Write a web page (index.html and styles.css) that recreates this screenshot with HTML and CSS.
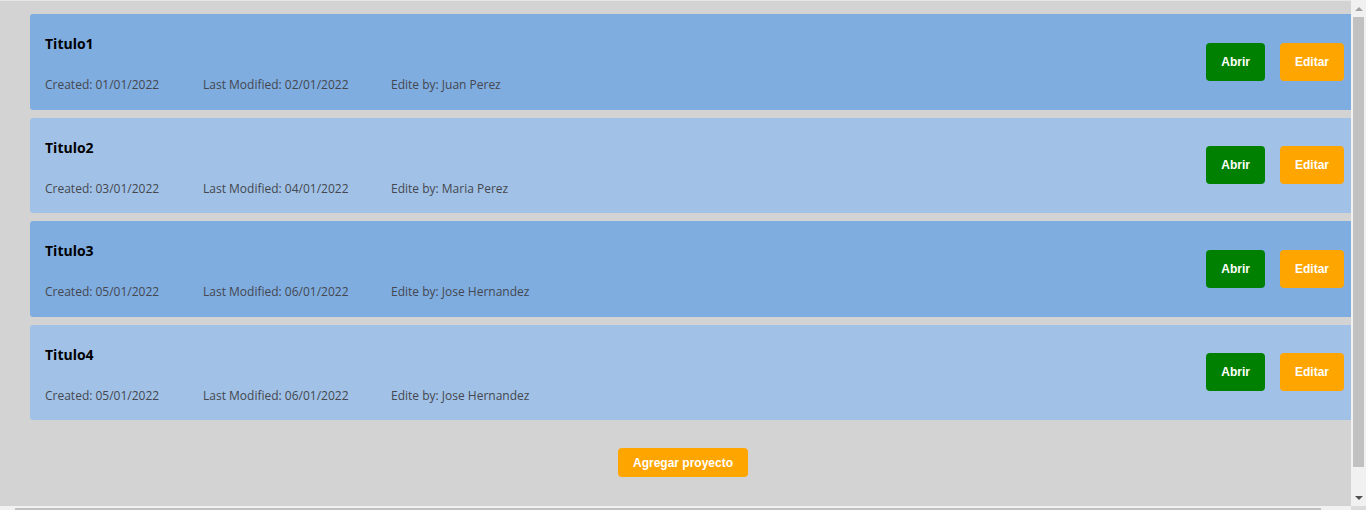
FILE: index.html
```html
<!DOCTYPE html>
<html lang="es">
<head>
<meta charset="utf-8">
<title>Proyectos</title>
<link rel="stylesheet" href="styles.css">
</head>
<body>
<div class="window">
  <div class="viewport">
    <div class="content">
      <div class="card dark">
        <div class="info">
          <h2 class="title">Titulo1</h2>
          <div class="meta"><span>Created: 01/01/2022</span><span>Last Modified: 02/01/2022</span><span>Edite by: Juan Perez</span></div>
        </div>
        <div class="actions"><button class="btn open">Abrir</button><button class="btn edit">Editar</button></div>
      </div>
      <div class="card light">
        <div class="info">
          <h2 class="title">Titulo2</h2>
          <div class="meta"><span>Created: 03/01/2022</span><span>Last Modified: 04/01/2022</span><span>Edite by: Maria Perez</span></div>
        </div>
        <div class="actions"><button class="btn open">Abrir</button><button class="btn edit">Editar</button></div>
      </div>
      <div class="card dark">
        <div class="info">
          <h2 class="title">Titulo3</h2>
          <div class="meta"><span>Created: 05/01/2022</span><span>Last Modified: 06/01/2022</span><span>Edite by: Jose Hernandez</span></div>
        </div>
        <div class="actions"><button class="btn open">Abrir</button><button class="btn edit">Editar</button></div>
      </div>
      <div class="card light">
        <div class="info">
          <h2 class="title">Titulo4</h2>
          <div class="meta"><span>Created: 05/01/2022</span><span>Last Modified: 06/01/2022</span><span>Edite by: Jose Hernandez</span></div>
        </div>
        <div class="actions"><button class="btn open">Abrir</button><button class="btn edit">Editar</button></div>
      </div>
      <div class="add-row"><button class="btn edit add">Agregar proyecto</button></div>
    </div>
  </div>
  <div class="vscroll">
    <div class="arrow up"></div>
    <div class="vthumb"></div>
    <div class="vspace"></div>
    <div class="arrow down"></div>
  </div>
  <div class="hscroll"><div class="hthumb"></div></div>
  <div class="corner"></div>
</div>
</body>
</html>
```
FILE: styles.css
```css
* { box-sizing: border-box; }
html, body { margin: 0; padding: 0; overflow: hidden; background: #d3d3d3; }
.window {
  width: 1366px;
  height: 510px;
  display: grid;
  grid-template-columns: 1351px 15px;
  grid-template-rows: 506px 15px;
  overflow: hidden;
}
.viewport {
  overflow: hidden;
  background: #d3d3d3;
  border-top: 1px solid #e6e6e6;
}
.content {
  width: 1366px;
  padding: 13px 7px 0 30px;
  display: flex;
  flex-direction: column;
  gap: 8px;
}
.card {
  height: 95.5px;
  border-radius: 3px;
  padding: 0 15px;
  display: flex;
  align-items: center;
  justify-content: space-between;
  font-family: "Open Sans", "Noto Sans", sans-serif;
}
.card.dark { background: #7fade0; }
.card.light { background: #a1c2e6; }
.info { align-self: stretch; display: flex; flex-direction: column; }
.title {
  margin: 0;
  padding-top: 20px;
  font-size: 14px;
  font-weight: 700;
  color: #000;
  line-height: 19px;
}
.meta {
  margin-top: 23px;
  display: grid;
  grid-template-columns: 158px 188px auto;
  font-size: 12px;
  line-height: 17px;
  color: #44474f;
}
.actions { display: flex; gap: 15px; }
.btn {
  height: 38px;
  padding: 0 15px;
  border: none;
  border-radius: 4px;
  color: #fff;
  font-family: "Liberation Sans", Arial, sans-serif;
  font-size: 12px;
  font-weight: 700;
}
.btn.open { background: #008000; }
.btn.edit { background: #ffa500; }
.add-row {
  margin-top: 20px;
  display: flex;
  justify-content: center;
  margin-left: -30px;
  margin-right: -7px;
}
.btn.add { height: 29px; }
.vscroll {
  background: #f1f1f1;
  display: flex;
  flex-direction: column;
  align-items: center;
}
.arrow { width: 15px; display: flex; align-items: center; justify-content: center; }
.arrow::before {
  content: "";
  width: 0; height: 0;
  border-left: 4px solid transparent;
  border-right: 4px solid transparent;
}
.arrow.up { height: 17px; }
.arrow.up::before { border-bottom: 4px solid #a3a3a3; }
.arrow.down { height: 17px; }
.arrow.down::before { border-top: 4px solid #505050; }
.vthumb { width: 11px; height: 450px; background: #c1c1c1; }
.vspace { flex: 1; }
.hscroll { background: #f1f1f1; padding: 2px 30px 0 15px; }
.hthumb { width: 1306px; height: 11px; background: #c1c1c1; }
.corner { background: #dcdcdc; }
```
